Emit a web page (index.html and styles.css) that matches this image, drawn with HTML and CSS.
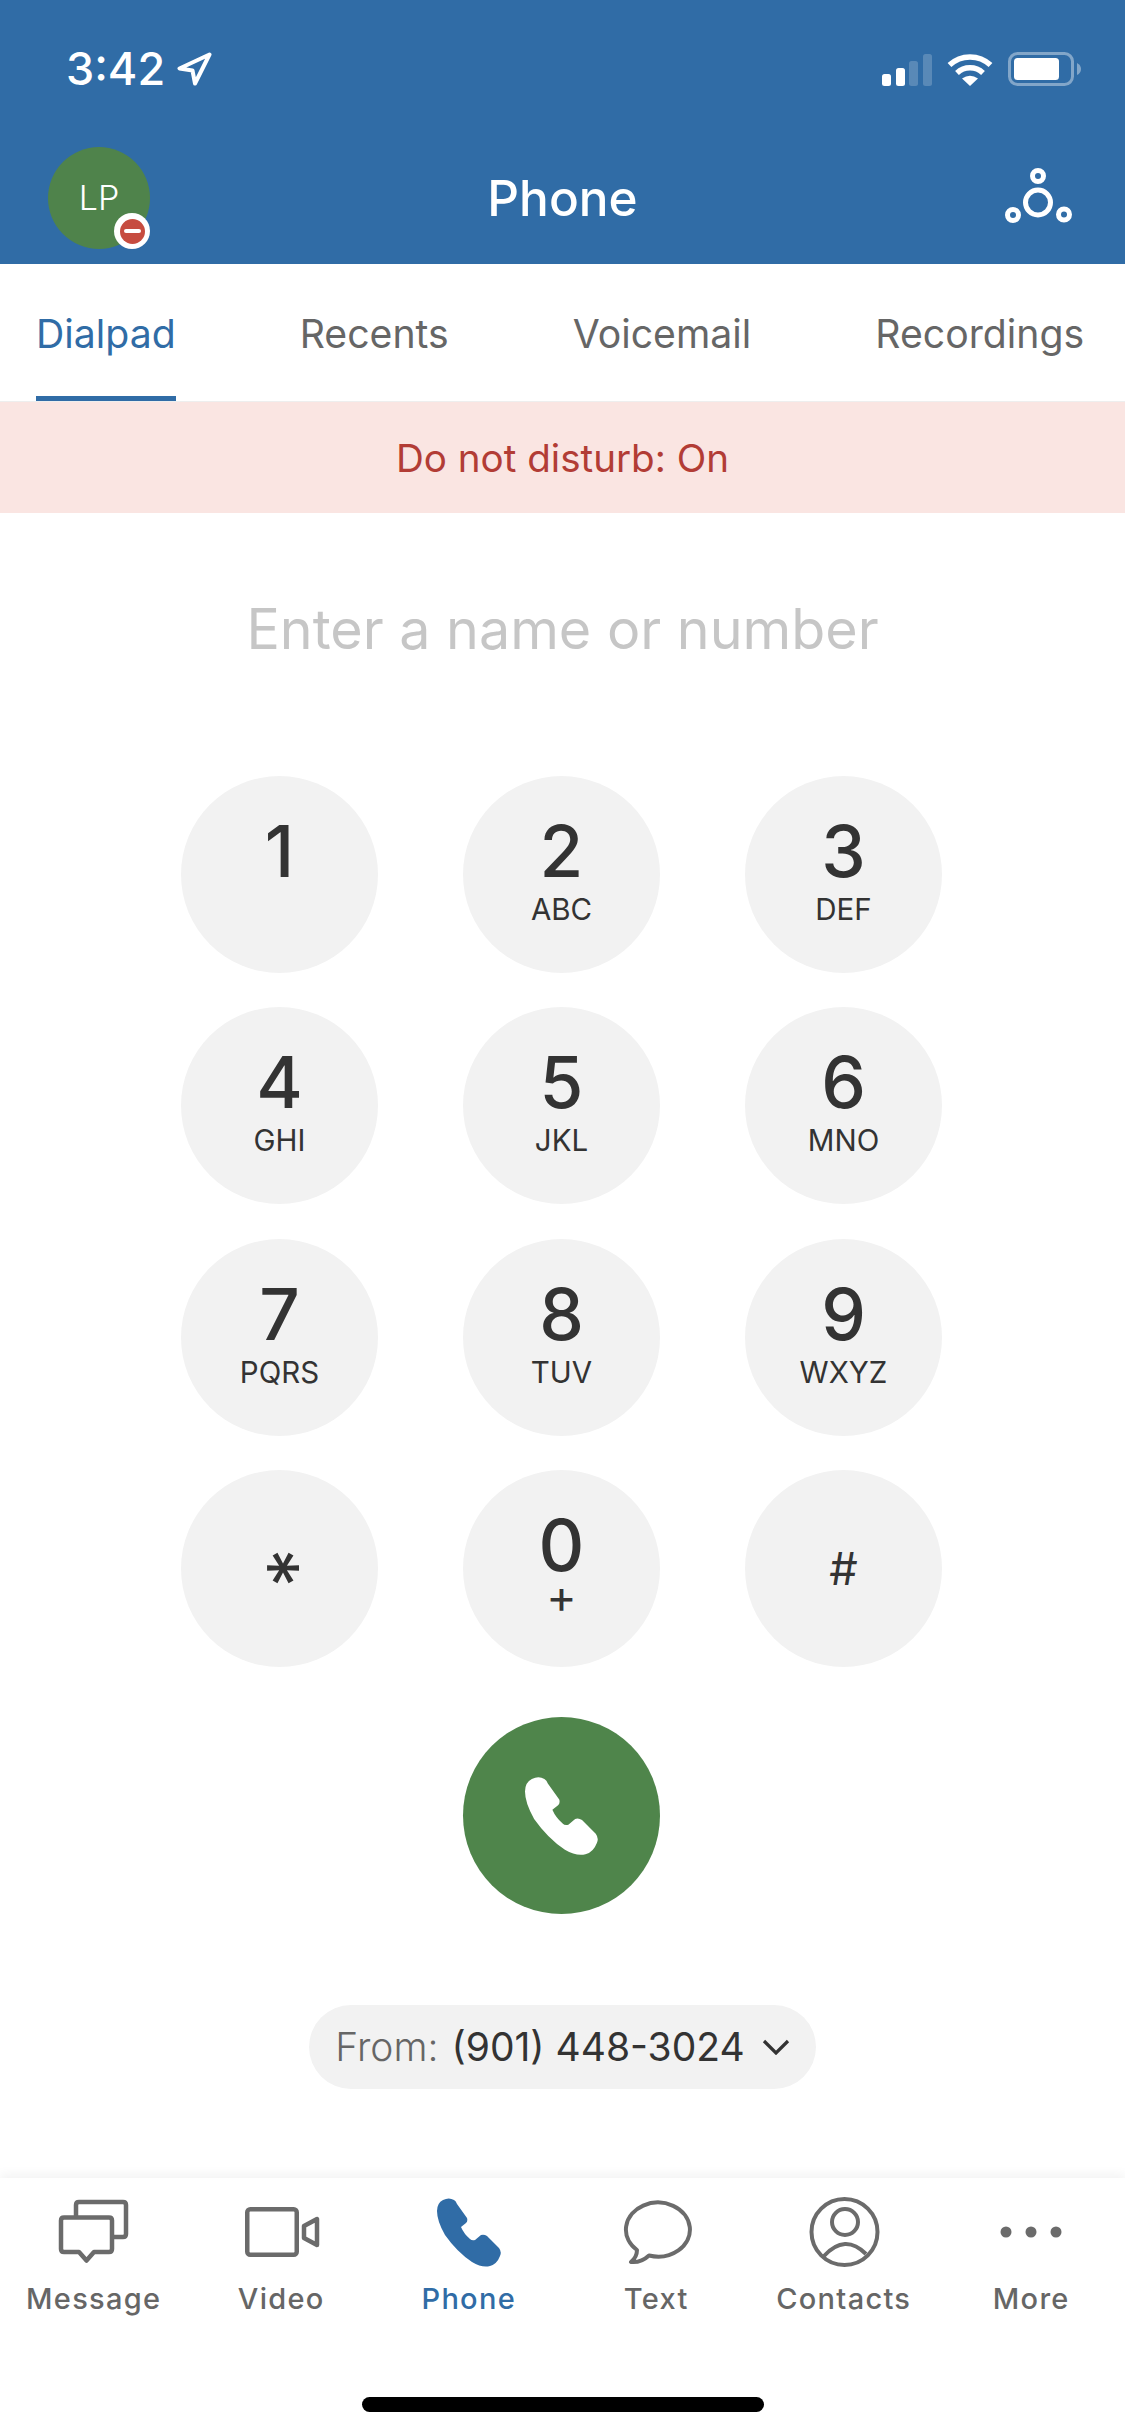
FILE: index.html
```html
<!DOCTYPE html>
<html lang="en">
<head>
<meta charset="utf-8">
<title>Phone</title>
<link rel="stylesheet" href="styles.css">
</head>
<body>
<div class="app">
  <header class="top">
    <div class="status">
      <div class="status-left">
        <span class="time">3:42</span>
        <svg class="loc" viewBox="0 0 35 34" width="35" height="34"><path d="M32.500 2.500 L2.500 16.500 L15.500 18.500 L18 31.500 Z" fill="none" stroke="#fff" stroke-width="4" stroke-linejoin="round"/></svg>
      </div>
      <div class="status-right">
        <svg class="signal" viewBox="0 0 50 33" width="50" height="33">
          <rect x="0" y="21" width="9" height="12" rx="2.500" fill="#fff"/>
          <rect x="14" y="15" width="9" height="18" rx="2.500" fill="#fff"/>
          <rect x="27" y="8" width="9" height="25" rx="2.500" fill="#fff" opacity=".2"/>
          <rect x="41" y="1" width="9" height="32" rx="2.500" fill="#fff" opacity=".2"/>
        </svg>
        <svg class="wifi" viewBox="0 0 46 33" width="46" height="33">
          <path d="M2.500 12 A30 30 0 0 1 43.500 12" fill="none" stroke="#fff" stroke-width="5.500"/>
          <path d="M10 20 A19 19 0 0 1 36 20" fill="none" stroke="#fff" stroke-width="5.500"/>
          <path d="M23 33 L15 25.500 Q23 20 31 25.500 Z" fill="#fff"/>
        </svg>
        <svg class="battery" viewBox="0 0 73 34" width="73" height="34">
          <rect x="1.500" y="1.500" width="63" height="31" rx="8" fill="none" stroke="#fff" stroke-opacity=".4" stroke-width="3"/>
          <rect x="6" y="6" width="45" height="22" rx="3.500" fill="#fff"/>
          <path d="M69 11 Q73 13 73 17 Q73 21 69 23 Z" fill="#fff" opacity=".4"/>
        </svg>
      </div>
    </div>
    <div class="titlebar">
      <div class="avatar">LP
        <span class="badge"><span class="badge-dot"><span class="badge-bar"></span></span></span>
      </div>
      <h1 class="title">Phone</h1>
      <svg class="connect" viewBox="0 0 67 55" width="67" height="55" fill="none" stroke="#fff" stroke-width="5">
        <circle cx="33" cy="34.500" r="12.500"/>
        <circle cx="33" cy="8" r="5.500"/>
        <circle cx="8" cy="47" r="5.500"/>
        <circle cx="59" cy="46.500" r="5.500"/>
      </svg>
    </div>
  </header>

  <nav class="tabs">
    <a class="tab tab-active">Dialpad</a>
    <a class="tab">Recents</a>
    <a class="tab">Voicemail</a>
    <a class="tab">Recordings</a>
  </nav>

  <div class="banner">Do not disturb: On</div>

  <div class="entry">Enter a name or number</div>

  <div class="keypad">
    <button class="key"><span class="digit">1</span><span class="letters"></span></button>
    <button class="key"><span class="digit">2</span><span class="letters">ABC</span></button>
    <button class="key"><span class="digit">3</span><span class="letters">DEF</span></button>
    <button class="key"><span class="digit">4</span><span class="letters">GHI</span></button>
    <button class="key"><span class="digit">5</span><span class="letters">JKL</span></button>
    <button class="key"><span class="digit">6</span><span class="letters">MNO</span></button>
    <button class="key"><span class="digit">7</span><span class="letters">PQRS</span></button>
    <button class="key"><span class="digit">8</span><span class="letters">TUV</span></button>
    <button class="key"><span class="digit">9</span><span class="letters">WXYZ</span></button>
    <button class="key key-sym"><span class="symbol symbol-star">*</span></button>
    <button class="key"><span class="digit">0</span><span class="letters letters-plus">+</span></button>
    <button class="key key-sym"><span class="symbol symbol-hash">#</span></button>
  </div>

  <button class="call">
    <svg viewBox="0 0 64 70" width="73" height="81"><path fill="#fff" d="M6 3 Q12 0 17 3 Q19 4 20 7 L30 21 Q31 24 29 26 L24 30 Q27 37 33 42 Q35 44 38 43 L44 38 Q47 37 50 39 L62 51 Q65 55 63 59 Q60 67 53 69 Q45 71 35 65 Q20 55 8 38 Q0 24 0 14 Q0 6 6 3 Z"/></svg>
  </button>

  <div class="from">
    <span class="from-label">From:</span>
    <span class="from-num">(901) 448-3024</span>
    <svg class="chevron" viewBox="0 0 28 16" width="28" height="16"><path d="M2 2 L14 14 L26 2" fill="none" stroke="#333" stroke-width="3.200"/></svg>
  </div>

  <footer class="bottom">
    <div class="nav">
      <div class="nav-item">
        <svg viewBox="0 0 80 70" width="80" height="70" fill="none" stroke="#6b6b6b" stroke-width="4.500" stroke-linejoin="round"><path d="M10 20.500 H55 Q58 20.500 58 23.500 V52 Q58 55 55 55 H40 L32.500 63.500 L25 55 H10 Q7 55 7 52 V23.500 Q7 20.500 10 20.500 Z"/><path d="M22 19 V8 Q22 5 25 5 H69 Q72 5 72 8 V37 Q72 40 69 40 H60"/></svg>
        <span>Message</span>
      </div>
      <div class="nav-item">
        <svg viewBox="0 0 80 70" width="80" height="70" fill="none" stroke="#6b6b6b" stroke-width="4.500" stroke-linejoin="round"><rect x="6.250" y="12.250" width="49.500" height="45.500" rx="3"/><path d="M63 29 L76 22 V48 L63 41 Z"/></svg>
        <span>Video</span>
      </div>
      <div class="nav-item nav-active">
        <svg viewBox="0 0 80 70" width="80" height="70"><path transform="translate(8 0)" fill="#306ca6" d="M6 3 Q12 0 17 3 Q19 4 20 7 L30 21 Q31 24 29 26 L24 30 Q27 37 33 42 Q35 44 38 43 L44 38 Q47 37 50 39 L62 51 Q65 55 63 59 Q60 67 53 69 Q45 71 35 65 Q20 55 8 38 Q0 24 0 14 Q0 6 6 3 Z"/></svg>
        <span>Phone</span>
      </div>
      <div class="nav-item">
        <svg viewBox="0 0 80 70" width="80" height="70" fill="none" stroke="#6b6b6b" stroke-width="4" stroke-linejoin="round"><path d="M33 58.500 A32 27 0 1 0 21 53 Q21 60 15 65 Q25 66 33 58.500 Z"/></svg>
        <span>Text</span>
      </div>
      <div class="nav-item">
        <svg viewBox="0 0 80 70" width="80" height="70" fill="none" stroke="#6b6b6b" stroke-width="4"><circle cx="40.500" cy="35" r="33"/><circle cx="41" cy="25" r="13"/><path d="M20 59 Q41 36 62 57"/></svg>
        <span>Contacts</span>
      </div>
      <div class="nav-item">
        <svg viewBox="0 0 80 70" width="80" height="70" fill="#6b6b6b"><circle cx="15" cy="35" r="5.500"/><circle cx="40" cy="35" r="5.500"/><circle cx="65" cy="35" r="5.500"/></svg>
        <span>More</span>
      </div>
    </div>
    <div class="home-bar"></div>
  </footer>
</div>
</body>
</html>
```
FILE: styles.css
```css
* { box-sizing: border-box; }
html, body { margin: 0; padding: 0; background: #fff; }
body { font-family: Inter, "Liberation Sans", sans-serif; color: #333; }
.app { width: 1125px; height: 2436px; display: flex; flex-direction: column; align-items: stretch; overflow: hidden; }

.top { height: 264px; background: #306ca6; color: #fff; }
.status { height: 147px; display: flex; justify-content: space-between; align-items: flex-start; padding: 52px 44px 0 66px; }
.status-left { display: flex; align-items: center; gap: 12px; height: 34px; }
.time { font-size: 45px; font-weight: 500; line-height: 34px; }
.status-right { display: flex; align-items: center; height: 34px; gap: 15px; }
.titlebar { height: 117px; display: grid; grid-template-columns: 1fr auto 1fr; align-items: start; padding: 0 48px; position: relative; }
.avatar { position: relative; width: 102px; height: 102px; border-radius: 50%; background: #4f834b; color: #fff; font-size: 34px; font-weight: 300; display: flex; align-items: center; justify-content: center; padding-bottom: 2px; }
.badge { position: absolute; right: 0; bottom: 0; width: 36px; height: 36px; border-radius: 50%; background: #fff; display: flex; align-items: center; justify-content: center; }
.badge-dot { width: 25px; height: 25px; border-radius: 50%; background: #c64c40; display: flex; align-items: center; justify-content: center; }
.badge-bar { width: 17px; height: 4px; background: #fff; border-radius: 2px; }
.title { margin: 0; padding-top: 21px; font-size: 49.500px; font-weight: 500; line-height: 60px; color: #fff; }
.connect { justify-self: end; margin: 21px 5px 0 0; }

.tabs { height: 137px; display: flex; gap: 124px; padding-left: 36px; }
.tab { font-size: 39.200px; font-weight: 400; color: #666; line-height: 1; padding-top: 50px; height: 137px; white-space: nowrap; }
.tab-active { color: #306ca6; border-bottom: 5px solid #306ca6; }

.banner { height: 112px; background: #fae5e2; border-top: 1px solid #eee; color: #b23c35; font-size: 38.600px; display: flex; align-items: center; justify-content: center; }

.entry { height: 263px; padding-top: 82px; text-align: center; font-size: 55.600px; line-height: 68px; color: #c6c6c6; font-weight: 400; }

.keypad { display: grid; grid-template-columns: repeat(3, 197px); grid-auto-rows: 197px; column-gap: 85px; row-gap: 34.300px; justify-content: center; padding-right: 2px; }
.key { margin: 0; padding: 36px 0 0; border: 0; border-radius: 50%; background: #f2f2f2; color: #333; font-family: inherit; display: flex; flex-direction: column; align-items: center; }
.digit { font-size: 71px; line-height: 78px; font-weight: 500; }
.letters { font-size: 29.500px; line-height: 34px; margin-top: 2px; }
.letters-plus { font-size: 46px; line-height: 32px; margin-top: -4px; }
.key-sym { justify-content: center; padding: 0; }
.symbol { font-size: 45px; line-height: 1; }
.symbol-star { font-size: 78px; transform: translateX(-10px) rotate(90deg); }

.call { align-self: center; margin: 50px 2px 0 0; padding: 0; width: 197px; height: 197px; border: 0; border-radius: 50%; background: #4f854b; display: flex; align-items: center; justify-content: center; }

.from { align-self: center; margin-top: 91px; width: 507px; height: 84px; border-radius: 42px; background: #f2f2f2; display: flex; align-items: center; justify-content: center; gap: 13px; font-size: 39px; white-space: nowrap; }
.from-label { color: #666; font-weight: 300; }
.from-num { color: #333; }
.chevron { margin-left: 4px; }

.bottom { margin-top: 89px; flex: 1; background: #fff; box-shadow: 0 -4px 10px rgba(0,0,0,.05); display: flex; flex-direction: column; align-items: center; }
.nav { width: 100%; display: grid; grid-template-columns: repeat(6, 1fr); padding-top: 19px; }
.nav-item { display: flex; flex-direction: column; align-items: center; font-size: 29px; font-weight: 500; color: #666; letter-spacing: 1.300px; }
.nav-item span { margin-top: 14px; line-height: 36px; }
.nav-active { color: #306ca6; }
.home-bar { margin-top: 80px; width: 402px; height: 15px; border-radius: 8px; background: #000; }
```
